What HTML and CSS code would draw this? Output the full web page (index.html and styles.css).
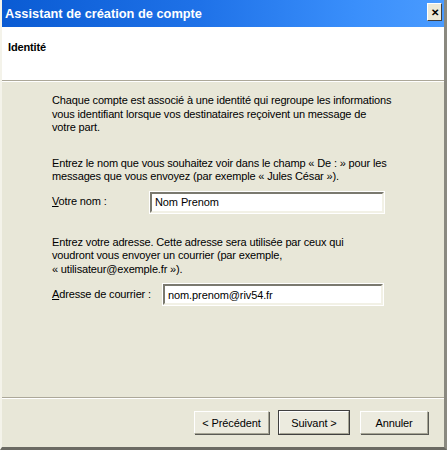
FILE: index.html
```html
<!DOCTYPE html>
<html lang="fr">
<head>
  <meta charset="UTF-8" />
  <title>Assistant de création de compte</title>
  <link rel="stylesheet" href="styles.css">
</head>
<body>
  <div class="window">
    <div class="titlebar">
      <span class="title">Assistant de création de compte</span>
      <span class="close">✕</span>
    </div>

    <div class="page-header">Identité</div>

    <div class="content">
      <p>Chaque compte est associé à une identité qui regroupe les informations<br />
        vous identifiant lorsque vos destinataires reçoivent un message de<br />
        votre part.</p>

      <p class="gap">Entrez le nom que vous souhaitez voir dans le champ « De : » pour les<br />
        messages que vous envoyez (par exemple « Jules César »).</p>

      <div class="field">
        <label class="name-label"><u>V</u>otre nom :</label>
        <input type="text" class="name-input" value="Nom Prenom" />
      </div>

      <p class="para3">Entrez votre adresse. Cette adresse sera utilisée par ceux qui<br />
        voudront vous envoyer un courrier (par exemple,<br />
        « utilisateur@exemple.fr »).</p>

      <div class="field">
        <label class="mail-label"><u>A</u>dresse de courrier :</label>
        <input type="text" class="mail-input" value="nom.prenom@riv54.fr" />
      </div>
    </div>

    <div class="buttons">
      <button class="btn-prev">&lt; Précédent</button>
      <button class="btn-next">Suivant &gt;</button>
      <button class="btn-cancel">Annuler</button>
    </div>
  </div>
</body>
</html>
```

FILE: styles.css
```css
:root {
  --face: #e8e7d8;
  --shadow: #a6a595;
  --dark: #5a5a55;
}

body {
  margin: 0;
  font-family: 'Liberation Sans', Arial, sans-serif;
  font-size: 11px;
  letter-spacing: -0.15px;
  color: #000;
  background: var(--face);
}

.window {
  width: 447px;
  height: 450px;
  box-sizing: border-box;
  display: flex;
  flex-direction: column;
  background: var(--face);
  border-left: 2px solid #f4f3ea;
  border-right: 3px solid #8a8980;
  border-bottom: 3px solid #6b6a63;
}

.titlebar {
  height: 27px;
  flex: none;
  display: flex;
  align-items: center;
  justify-content: space-between;
  padding: 0 2px 0 3px;
  background: linear-gradient(to right, #0a5bd3 0%, #1f72e8 45%, #3a8ffb 80%, #4a9bff 100%);
  color: #fff;
}

.title {
  font-weight: bold;
  font-size: 12.8px;
  letter-spacing: 0;
}

.close {
  width: 15px;
  height: 18px;
  box-sizing: border-box;
  display: flex;
  align-items: center;
  justify-content: center;
  background: #ece9d8;
  color: #000;
  font-size: 10px;
  font-weight: bold;
  border: 1px solid;
  border-color: #fff #404040 #404040 #fff;
  margin-top: -3px;
}

.page-header {
  height: 54px;
  flex: none;
  box-sizing: border-box;
  background: #fff;
  font-weight: bold;
  padding: 14px 0 0 6px;
  border-bottom: 1px solid #aca899;
  box-shadow: 0 1px 0 #fff;
}

.content {
  flex: 1;
  padding: 13px 0 0 50px;
  line-height: 13.5px;
}

.content p {
  margin: 0;
}

.content .gap {
  margin-top: 22px;
}

.field {
  display: flex;
  align-items: center;
  margin-top: 8px;
}

.name-label {
  width: 98px;
}

.mail-label {
  width: 111px;
}

input[type="text"] {
  height: 21px;
  box-sizing: border-box;
  border: 2px solid;
  border-color: #7a796f #f2f1e6 #f2f1e6 #7a796f;
  outline: 1px solid #fff;
  font-family: inherit;
  font-size: 11px;
  letter-spacing: -0.1px;
  padding: 0 3px;
  background: #fff;
}

.name-input {
  width: 234px;
}

.mail-input {
  width: 220px;
}

.content .para3 {
  margin-top: 23px;
}

.buttons {
  flex: none;
  height: 50px;
  box-sizing: border-box;
  border-top: 1px solid #aca899;
  box-shadow: inset 0 1px 0 #fff;
  display: flex;
  justify-content: flex-end;
  align-items: flex-start;
  padding: 13px 16px 0 0;
}

button {
  height: 23px;
  box-sizing: border-box;
  background: #ecebdf;
  font-family: inherit;
  font-size: 11px;
  letter-spacing: -0.1px;
  color: #000;
  border: 1px solid;
  border-color: #fff var(--shadow) var(--shadow) #fff;
  box-shadow: 1px 1px 0 var(--dark);
  padding: 0;
}

.btn-prev {
  width: 75px;
}

.btn-next {
  width: 70px;
  margin-left: 10px;
  outline: 1px solid #404040;
}

.btn-cancel {
  width: 68px;
  margin-left: 11px;
}
```
